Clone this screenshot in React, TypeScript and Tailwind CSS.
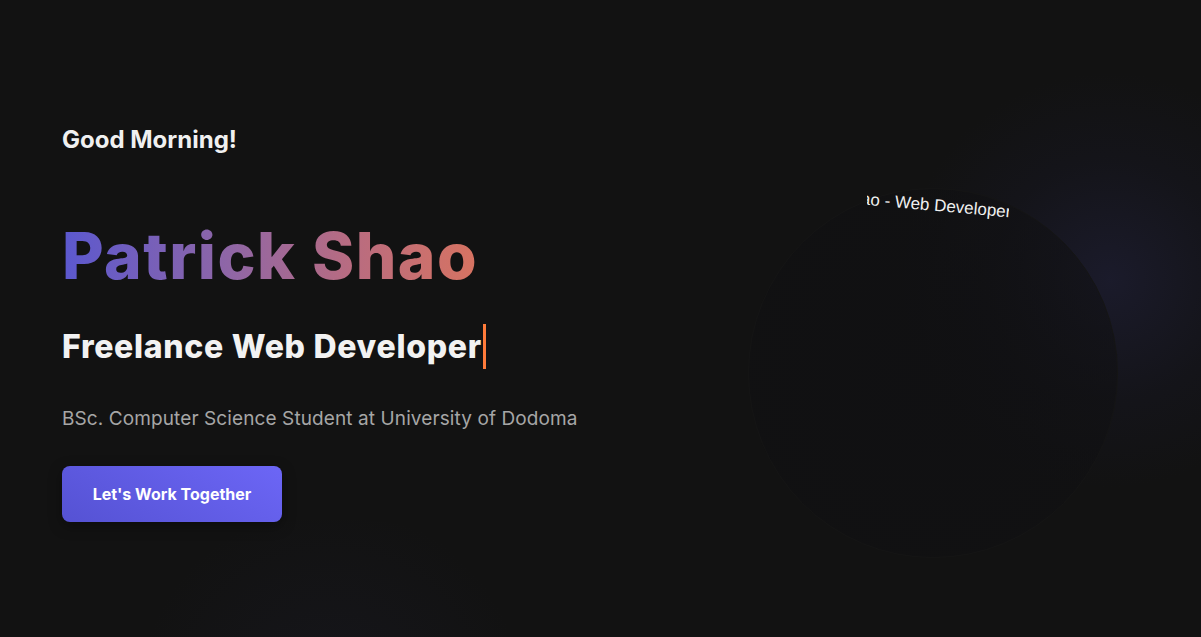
import React from "react"

const Hero: React.FC = () => {
    return (
        <section className="relative flex h-[637px] w-full overflow-hidden bg-[#121212]">
            {/* background glows */}
            <div className="pointer-events-none absolute left-[900px] top-[70px] h-[420px] w-[420px] rounded-full bg-[radial-gradient(circle,rgba(40,40,80,0.4)_0%,rgba(30,30,60,0.18)_40%,rgba(18,18,18,0)_70%)]" />
            <div className="pointer-events-none absolute left-[120px] top-[520px] h-[360px] w-[420px] rounded-full bg-[radial-gradient(circle,rgba(40,40,70,0.18)_0%,rgba(18,18,18,0)_70%)]" />

            <div className="relative z-10 flex w-full">
                {/* left column */}
                <div className="flex w-[640px] flex-col pl-[62px] pt-[124px]">
                    <p className="font-['Inter',sans-serif] text-[24px] font-bold leading-[32px] text-[#f0f0f0]">
                        Good Morning!
                    </p>

                    <h1 className="mt-[58px] w-fit bg-[linear-gradient(90deg,#5b58cf_0%,#8f66a6_40%,#b96c80_70%,#d77361_100%)] bg-clip-text font-['Inter',sans-serif] text-[64px] font-extrabold leading-[84px] tracking-[1.5px] text-transparent">
                        Patrick Shao
                    </h1>

                    <div className="mt-[26px] flex items-center">
                        <h2 className="font-['Inter',sans-serif] text-[32px] font-extrabold leading-[44px] tracking-[0.7px] text-[#f2f2f2]">
                            Freelance Web Developer
                        </h2>
                        <span className="ml-[1px] h-[45px] w-[3px] bg-[#ff7b3a]" />
                    </div>

                    <p className="mt-[36px] font-['Inter',sans-serif] text-[19px] leading-[28px] tracking-[0.1px] text-[#a6a6a6]">
                        BSc. Computer Science Student at University of Dodoma
                    </p>

                    <div className="mt-[33px]">
                        <button className="h-[56px] w-[220px] rounded-lg bg-[linear-gradient(30deg,#5552d3_0%,#6c66f6_100%)] font-['Inter',sans-serif] text-[16px] font-bold text-white shadow-[0_4px_14px_rgba(0,0,0,0.35)]">
                            Let's Work Together
                        </button>
                    </div>
                </div>

                {/* right column: decorative circle with rotating caption */}
                <div className="flex flex-1 pl-[108px] pt-[188px]">
                    <div className="relative h-[370px] w-[370px] rounded-full border border-[#151515] bg-[radial-gradient(circle,rgba(16,16,18,0.9)_0%,rgba(16,16,18,0.6)_70%,rgba(18,18,18,0)_100%)]">
                        <div className="absolute left-[118px] top-[0px] h-[30px] w-[142px] overflow-hidden">
                            <span className="absolute right-[-3px] top-[3px] origin-center rotate-[5deg] whitespace-nowrap font-['Liberation_Sans',Arial,sans-serif] text-[17px] text-[#f0f0f0]">
                                Shao - Web Developer
                            </span>
                        </div>
                    </div>
                </div>
            </div>
        </section>
    )
}

export default function App() {
    return <Hero />
}
